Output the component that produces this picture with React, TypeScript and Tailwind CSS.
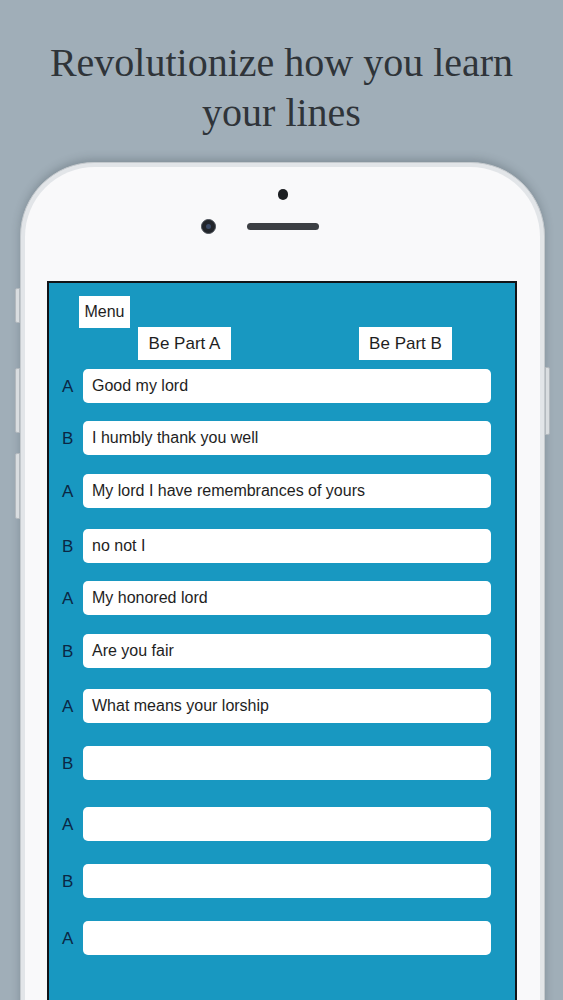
import React from 'react';

type Line = { who: 'A' | 'B'; text: string; gap: string };

// top margins are taken from the screenshot, the rows are not evenly spaced
const lines: Line[] = [
  { who: 'A', text: 'Good my lord', gap: 'mt-[9px]' },
  { who: 'B', text: 'I humbly thank you well', gap: 'mt-[18px]' },
  { who: 'A', text: 'My lord I have remembrances of yours', gap: 'mt-[19px]' },
  { who: 'B', text: 'no not I', gap: 'mt-[21px]' },
  { who: 'A', text: 'My honored lord', gap: 'mt-[18px]' },
  { who: 'B', text: 'Are you fair', gap: 'mt-[19px]' },
  { who: 'A', text: 'What means your lorship', gap: 'mt-[21px]' },
  { who: 'B', text: '', gap: 'mt-[23px]' },
  { who: 'A', text: '', gap: 'mt-[27px]' },
  { who: 'B', text: '', gap: 'mt-[23px]' },
  { who: 'A', text: '', gap: 'mt-[23px]' },
];

const sans = "font-['Liberation_Sans',Arial,sans-serif]";

const ScriptRow: React.FC<{ line: Line }> = ({ line }) => (
  <div className={`flex items-center ${line.gap}`}>
    <span className="w-[21px] text-[17px] leading-none text-[#0b2744]">{line.who}</span>
    <div className="flex-1 h-[34px] bg-white rounded-[5px] flex items-center pl-[9px] text-[16px] text-[#1e1e1e]">
      {line.text}
    </div>
  </div>
);

const App: React.FC = () => {
  return (
    <div className="w-full h-[1000px] overflow-hidden bg-[#a0aeb8] flex flex-col">
      {/* Headline */}
      <h1 className="pt-[38px] text-center font-['Liberation_Serif','Times_New_Roman',serif] text-[40px] leading-[50px] text-[#2f3439] font-normal">
        Revolutionize how you learn
        <br />
        your lines
      </h1>

      {/* Phone */}
      <div className="relative mt-[24px] mx-[20px] mr-[18px] h-[900px] shrink-0">
        {/* side buttons */}
        <div className="absolute left-[-5px] top-[126px] w-[5px] h-[35px] bg-[#d9dde0] border border-[#b3b9be] rounded-l-[2px]" />
        <div className="absolute left-[-5px] top-[206px] w-[5px] h-[65px] bg-[#d9dde0] border border-[#b3b9be] rounded-l-[2px]" />
        <div className="absolute left-[-5px] top-[291px] w-[5px] h-[66px] bg-[#d9dde0] border border-[#b3b9be] rounded-l-[2px]" />
        <div className="absolute right-[-5px] top-[205px] w-[5px] h-[68px] bg-[#d9dde0] border border-[#b3b9be] rounded-r-[2px]" />

        <div className="h-full bg-[#e2e5e8] border border-[#c4c9cd] rounded-t-[74px] p-[4px] shadow-[0_-3px_8px_rgba(40,50,60,0.25)]">
          <div className="h-full bg-[#f9f9fa] rounded-t-[70px] flex flex-col items-center">
            {/* sensor dot */}
            <div className="mt-[22px] w-[10px] h-[11px] rounded-full bg-[#1d1f22]" />
            {/* camera + speaker */}
            <div className="mt-[19px] flex items-center gap-[31px]">
              <div className="w-[15px] h-[15px] rounded-full bg-[#22252a] border border-[#4a4f57] flex items-center justify-center">
                <div className="w-[5px] h-[5px] rounded-full bg-[#3b4a66]" />
              </div>
              <div className="w-[72px] h-[7px] rounded-full bg-[#3c3f43]" />
              <div className="w-[15px] h-[15px]" />
            </div>

            {/* Screen */}
            <div className={`mt-[47px] self-stretch ml-[22px] mr-[23px] flex-1 bg-[#1898c1] border-2 border-b-0 border-[#111418] ${sans}`}>
              <div className="pt-[13px] pl-[30px]">
                <button className="h-[32px] w-[51px] bg-white text-[16px] text-[#1e1e1e] flex items-center justify-center">
                  Menu
                </button>
              </div>
              <div className="flex ml-[89px] gap-[128px] -mt-[1px]">
                <button className="h-[33px] w-[93px] bg-white text-[17px] text-[#1e1e1e] flex items-center justify-center">
                  Be Part A
                </button>
                <button className="h-[33px] w-[93px] bg-white text-[17px] text-[#1e1e1e] flex items-center justify-center">
                  Be Part B
                </button>
              </div>
              <div className="pl-[13px] pr-[24px]">
                {lines.map((l, i) => (
                  <ScriptRow key={i} line={l} />
                ))}
              </div>
            </div>
          </div>
        </div>
      </div>
    </div>
  );
};

export default App;
